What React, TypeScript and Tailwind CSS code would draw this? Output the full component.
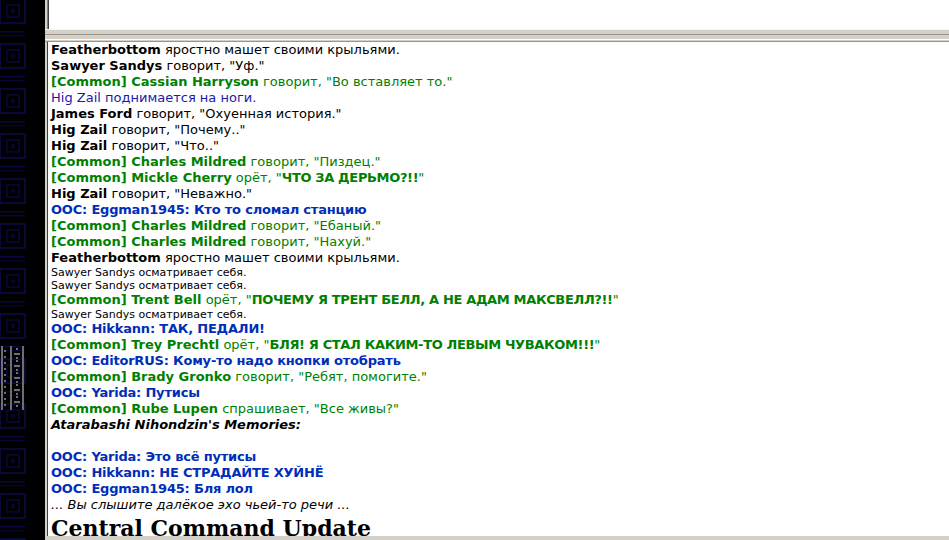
import React from "react";

// цвета чата
const GREEN = "text-[#008000]";
const OOC = "text-[#002eb8]";

// тёмная полоса слева с узором
const Sidebar = () => (
    <div className="w-[45px] shrink-0 bg-black">
        <svg width="45" height="540" viewBox="0 0 45 540">
            <defs>
                <pattern id="tiles" x="0" y="-4" width="45" height="45" patternUnits="userSpaceOnUse">
                    <rect x="0" y="3" width="25" height="24" fill="none" stroke="#0a0a4c" strokeWidth="1.5" />
                    <rect x="7" y="9" width="12" height="12" fill="none" stroke="#08083c" strokeWidth="1.5" />
                    <rect x="11" y="13" width="4" height="4" fill="#05052a" />
                    <rect x="0" y="35" width="25" height="1.5" fill="#080840" />
                    <rect x="0" y="39" width="25" height="1.5" fill="#06062e" />
                </pattern>
            </defs>
            <rect x="0" y="0" width="45" height="540" fill="url(#tiles)" />
            {/* серая лесенка */}
            <g fill="#6e6e6e">
                <rect x="1" y="346" width="2" height="64" />
                <rect x="10" y="346" width="2" height="64" />
                <rect x="22" y="346" width="2" height="64" />
                {[350, 362, 374, 386, 398].map((y) => (
                    <g key={y}>
                        <rect x="4" y={y} width="2" height="2" />
                        <rect x="14" y={y + 3} width="6" height="2" />
                        <rect x="16" y={y - 2} width="2" height="2" />
                        <rect x="4" y={y + 6} width="2" height="2" />
                        <rect x="16" y={y + 7} width="2" height="2" />
                    </g>
                ))}
            </g>
        </svg>
    </div>
);

// обычная речь: имя жирным, остальное обычным
const Say = ({ name, rest, color = "text-black" }: { name: string; rest: React.ReactNode; color?: string }) => (
    <div className={color}>
        <b>{name}</b> {rest}
    </div>
);

const Common = ({ name, verb = "говорит", text, loud }: { name: string; verb?: string; text: string; loud?: boolean }) => (
    <div className={GREEN}>
        <b>[Common] {name}</b> {verb}, "{loud ? <b className="tracking-[-0.35px]">{text}</b> : text}"
    </div>
);

const Ooc = ({ children }: { children: React.ReactNode }) => (
    <div className={`${OOC} font-bold tracking-[-0.2px]`}>OOC: {children}</div>
);

const Small = ({ children }: { children: React.ReactNode }) => (
    <div className="text-[11px] leading-[13px]">{children}</div>
);

const ChatLog = () => (
    <div className="flex-1 overflow-hidden bg-white border-l border-[#404040] pl-[3px] font-['DejaVu_Sans',Verdana,sans-serif] text-[13px] leading-[16px] text-black">
        <Say name="Featherbottom" rest="яростно машет своими крыльями." />
        <Say name="Sawyer Sandys" rest={'говорит, "Уф."'} />
        <Common name="Cassian Harryson" text="Во вставляет то." />
        <div className="text-[#1a1aa6]">Hig Zail поднимается на ноги.</div>
        <Say name="James Ford" rest={'говорит, "Охуенная история."'} />
        <Say name="Hig Zail" rest={'говорит, "Почему.."'} />
        <Say name="Hig Zail" rest={'говорит, "Что.."'} />
        <Common name="Charles Mildred" text="Пиздец." />
        <Common name="Mickle Cherry" verb="орёт" text="ЧТО ЗА ДЕРЬМО?!!" loud />
        <Say name="Hig Zail" rest={'говорит, "Неважно."'} />
        <Ooc>Eggman1945: Кто то сломал станцию</Ooc>
        <Common name="Charles Mildred" text="Ебаный." />
        <Common name="Charles Mildred" text="Нахуй." />
        <Say name="Featherbottom" rest="яростно машет своими крыльями." />
        <Small>Sawyer Sandys осматривает себя.</Small>
        <Small>Sawyer Sandys осматривает себя.</Small>
        <Common name="Trent Bell" verb="орёт" text="ПОЧЕМУ Я ТРЕНТ БЕЛЛ, А НЕ АДАМ МАКСВЕЛЛ?!!" loud />
        <Small>Sawyer Sandys осматривает себя.</Small>
        <Ooc>Hikkann: ТАК, ПЕДАЛИ!</Ooc>
        <Common name="Trey Prechtl" verb="орёт" text="БЛЯ! Я СТАЛ КАКИМ-ТО ЛЕВЫМ ЧУВАКОМ!!!" loud />
        <Ooc>EditorRUS: Кому-то надо кнопки отобрать</Ooc>
        <Common name="Brady Gronko" text="Ребят, помогите." />
        <Ooc>Yarida: Путисы</Ooc>
        <Common name="Rube Lupen" verb="спрашивает" text="Все живы?" />
        <div className="font-bold italic">Atarabashi Nihondzin's Memories:</div>
        <div className="h-[16px]" />
        <Ooc>Yarida: Это всё путисы</Ooc>
        <Ooc>Hikkann: НЕ СТРАДАЙТЕ ХУЙНЁ</Ooc>
        <Ooc>Eggman1945: Бля лол</Ooc>
        <div className="italic">... Вы слышите далёкое эхо чьей-то речи ...</div>
        <div className="font-['DejaVu_Serif',Georgia,serif] font-bold text-[22px] leading-[26px] mt-[2px]">Central Command Update</div>
    </div>
);

export default function App() {
    return (
        <div className="flex w-[949px] h-[540px] overflow-hidden bg-[#d4d0c8]">
            <Sidebar />
            <div className="flex flex-col flex-1 min-w-0">
                {/* поле ввода */}
                <div className="h-[29px] shrink-0 ml-[2px] bg-white border-l border-[#808080] shadow-[inset_1px_0_0_#404040]" />
                {/* разделитель */}
                <div className="h-[13px] shrink-0 flex flex-col">
                    <div className="h-[1px] bg-[#f4f2ee]" />
                    <div className="h-[4px]" />
                    <div className="h-[1px] bg-[#9a968e]" />
                    <div className="h-[4px]" />
                    <div className="h-[1px] bg-white" />
                    <div className="h-[1px]" />
                    <div className="h-[1px] bg-[#9a968e]" />
                </div>
                <div className="flex flex-1 min-h-0 ml-[2px]">
                    <ChatLog />
                </div>
                <div className="h-[4px] shrink-0" />
            </div>
        </div>
    );
}
